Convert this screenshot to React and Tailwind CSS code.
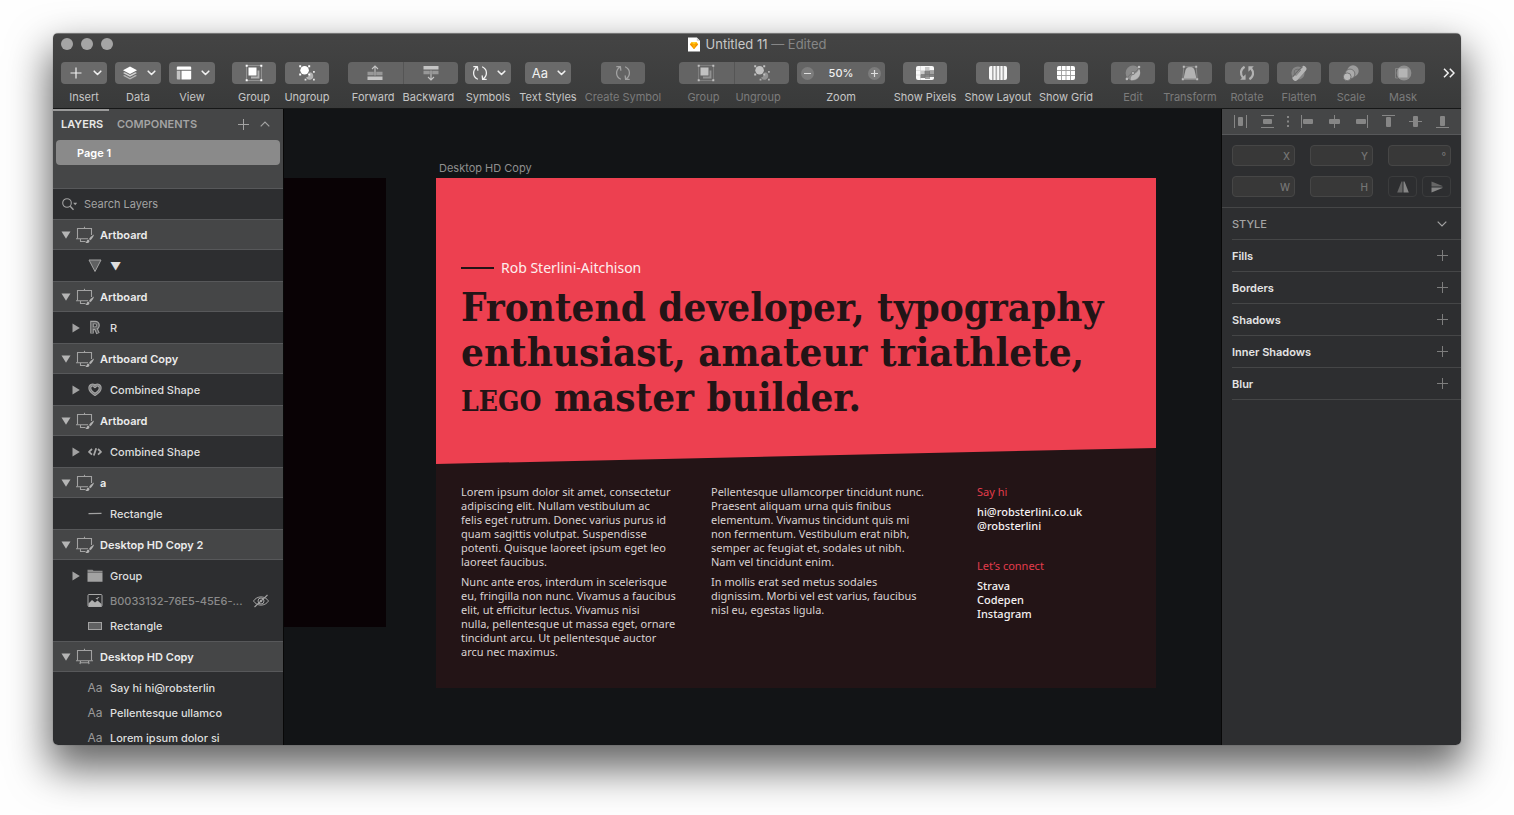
import React from "react";

/* ---------- small glyphs ---------- */

function Svg({ w, h, className = "", children }) {
  return (
    <svg width={w} height={h} viewBox={`0 0 ${w} ${h}`} className={`shrink-0 ${className}`} fill="none" aria-hidden="true">
      {children}
    </svg>
  );
}

const Chevron = () => (
  <Svg w={9} h={6}>
    <path d="M1.2 1.2 4.5 4.5 7.8 1.2" stroke="#f0f0f0" strokeWidth="1.6" strokeLinecap="round" strokeLinejoin="round" />
  </Svg>
);

const PlusGlyph = () => (
  <Svg w={16} h={16}>
    <path d="M8 2.5v11M2.5 8h11" stroke="#f0f0f0" strokeWidth="1.2" />
  </Svg>
);

const DataGlyph = () => (
  <Svg w={16} h={16}>
    <path d="M1 5.2 8 1.5l7 3.7-7 3.8z" fill="#fff" />
    <path d="M1 8l1.6-.8L8 10.1l5.4-2.9L15 8l-7 3.8z" fill="#d2d2d2" />
    <path d="M1 10.8l1.6-.8L8 12.9l5.4-2.9 1.6.8-7 3.8z" fill="#b4b4b4" />
  </Svg>
);

const ViewGlyph = () => (
  <Svg w={16} h={16}>
    <path d="M1.8 1.5h12.4a1 1 0 0 1 1 1v2.2H.8V2.5a1 1 0 0 1 1-1z" fill="#fff" />
    <path d="M.8 5.8h3.6v8.7H1.8a1 1 0 0 1-1-1z" fill="#c4c4c4" />
    <path d="M5.5 5.8h9.7v7.700a1 1 0 0 1-1 1H5.5z" fill="#fff" />
  </Svg>
);

const GroupGlyph = () => (
  <Svg w={18} h={18}>
    <path d="M12.5 6.5h1.9v8H6v-2h6.5z" fill="#b2b2b2" />
    <rect x="3.5" y="3.5" width="8" height="8" fill="#fff" />
    <rect x="1.5" y="1.5" width="15" height="15" stroke="#9b9b9b" strokeWidth=".8" />
    <path d="M.7.7h2v2h-2zM15.3.7h2v2h-2zM.7 15.3h2v2h-2zM15.3 15.3h2v2h-2z" fill="#fff" />
  </Svg>
);

const UngroupGlyph = () => (
  <Svg w={18} h={18}>
    <path d="M11.5 8.2a3.800 3.800 0 1 1-3.5 5.400 5 5 0 0 0 3.5-5.400z" fill="#b2b2b2" />
    <circle cx="6.6" cy="6.2" r="4.3" fill="#fff" />
    <path d="M1.2 1.2h2v2h-2zM10.2 1.2h2v2h-2zM1.2 9.6h2v2h-2zM10.2 9.6h2v2h-2z" fill="#fff" />
    <path d="M15 7h1.800v1.800H15zM6.6 14.8h1.800v1.800H6.6zM15 14.8h1.800v1.800H15z" fill="#e4e4e4" />
  </Svg>
);

const ForwardGlyph = () => (
  <Svg w={16} h={16}>
    <path d="M.5 11.5h15V15H.5z" fill="#c4c4c4" />
    <path d="M.5 6.8h6.300v3.500H.5zM9.2 6.800h6.300v3.500H9.200z" fill="#989898" />
    <path d="M8 10.5V1M5 4l3-3 3 3" stroke="#c4c4c4" strokeWidth="1.1" />
  </Svg>
);

const BackwardGlyph = () => (
  <Svg w={16} h={16}>
    <path d="M.5 1h15v3.500H.5z" fill="#c4c4c4" />
    <path d="M.5 5.700h6.300v3.500H.5zM9.200 5.700h6.300v3.500H9.200z" fill="#989898" />
    <path d="M8 5.500V15M5 12l3 3 3-3" stroke="#c4c4c4" strokeWidth="1.1" />
  </Svg>
);

const CycleGlyph = ({ dim }) => (
  <Svg w={16} h={16}>
    <g stroke={dim ? "#a2a2a2" : "#f0f0f0"} strokeWidth="1.300" strokeLinecap="round" strokeLinejoin="round">
      <path d="M5.400 14C.4 11.500.4 5 5 2M1.800 1.700 5.400 1.600l.4 3.600" />
      <path d="M10.600 2c5 2.500 5 9 .4 12M14.200 14.300l-3.600.1-.4-3.600" />
    </g>
  </Svg>
);

const PixelsGlyph = () => (
  <Svg w={18} h={14}>
    <rect width="18" height="14" rx="2" fill="#f8f8f8" />
    <path d="M4.500 0v14M0 4.500h18M0 9h6" stroke="#cfcfcf" strokeWidth=".6" />
    <path d="M9 4h4.500V1H9zM4.500 8.500H9V5H4.500z" fill="#c9c9c9" />
    <path d="M9 4.500h9V11H9zM4.500 8.500H9V12H4.500z" fill="#858585" />
    <path d="M13.500 4.500H18V8h-4.500zM9 11h5v2H9z" fill="#a2a2a2" />
    <path d="M9 5v7M13.500 5v6M5 8.500h13" stroke="#747474" strokeWidth=".7" />
  </Svg>
);

const LayoutGlyph = () => (
  <Svg w={18} h={14}>
    <rect width="18" height="14" rx="2" fill="#f8f8f8" />
    <path d="M3 0h1.600v14H3zM6.500 0h1.600v14H6.500zM10 0h1.600v14H10zM13.500 0h1.600v14h-1.600z" fill="#ababab" />
  </Svg>
);

const GridGlyph = () => (
  <Svg w={18} h={14}>
    <rect width="18" height="14" rx="2" fill="#fff" />
    <path d="M4.500 0v14M9 0v14M13.500 0v14M0 4.500h18M0 9.500h18" stroke="#9a9a9a" strokeWidth=".9" />
  </Svg>
);

const EditGlyph = () => (
  <Svg w={16} h={16}>
    <circle cx="8" cy="8" r="7.400" fill="#898989" />
    <path d="M14 3.800C17.200 9 13 15.800 5.800 15.200c-.5-3.500 1-5 3.200-6s4-2.400 5-5.400z" fill="#b8b8b8" />
    <path d="M1.800 14C3.200 11 4.800 9.200 8 8s5-3 6-6" stroke="#6e6e6e" strokeWidth=".9" />
    <circle cx="8" cy="8" r="1.600" fill="#b8b8b8" stroke="#6e6e6e" strokeWidth=".7" />
    <circle cx="1.900" cy="13.900" r="1.300" fill="#bdbdbd" />
    <circle cx="14" cy="2" r="1.300" fill="#bdbdbd" />
  </Svg>
);

const TransformGlyph = () => (
  <Svg w={18} h={16}>
    <path d="M4.500 5C5.500 2.500 7 2 9 2s3.500.5 4.500 3l2 8.800h-13z" fill="#b2b2b2" />
    <path d="M2.800 1.800h12.400M2.800 2 1.800 14M15.200 2l1 12M2 14.500h14" stroke="#929292" strokeWidth=".8" />
    <path d="M1.800.8h2v2h-2zM14.200.8h2v2h-2zM.8 13.200h2v2h-2zM15.200 13.200h2v2h-2z" fill="#bdbdbd" />
  </Svg>
);

const RotateGlyph = () => (
  <Svg w={16} h={16}>
    <g stroke="#b2b2b2" strokeWidth="2.200">
      <path d="M5.600 1.800C1.300 4.500.9 9 4 12.800" />
      <path d="M10.400 14.200c4.300-2.700 4.700-7.200 1.600-11" />
    </g>
    <path d="M6.600 9.300v5.400H1.200zM9.400 6.700V1.300h5.400z" fill="#b2b2b2" />
  </Svg>
);

const FlattenGlyph = () => (
  <Svg w={16} h={16}>
    <circle cx="7" cy="8" r="6.600" fill="#868686" />
    <rect x="5.800" y="-1" width="5.600" height="18" rx="2.800" transform="rotate(42 8 8)" fill="#b5b5b5" />
    <path d="M1.800 11.500 11.500 1.500" stroke="#6a6a6a" strokeWidth="1.200" />
    <path d="M3.500 5.500a4.200 4.200 0 0 1 6 0L5 10.500a4 4 0 0 1-1.500-5z" stroke="#6a6a6a" strokeWidth=".8" />
  </Svg>
);

const ScaleGlyph = () => (
  <Svg w={16} h={16}>
    <circle cx="10" cy="6" r="5.700" fill="#9c9c9c" />
    <circle cx="7" cy="9" r="4.900" fill="#aaa" stroke="#666" strokeWidth=".8" />
    <circle cx="4.200" cy="11.800" r="3.900" fill="#b8b8b8" stroke="#666" strokeWidth=".8" />
  </Svg>
);

const MaskGlyph = () => (
  <Svg w={18} h={16}>
    <path d="M4 3.500H1.500v9.500H4" stroke="#868686" strokeWidth=".9" />
    <circle cx="10" cy="8" r="7.400" fill="#8f8f8f" />
    <rect x="4.500" y="3.500" width="9" height="9" fill="#b5b5b5" />
  </Svg>
);

const SketchDoc = () => (
  <Svg w={12} h={15}>
    <path d="M0 .5h8.800L12 3.700v10.800H0z" fill="#fff" />
    <path d="M8.800.5v3.200H12z" fill="#cfcfcf" />
    <path d="M3.600 5h4.800l1.800 2.200L6 12 1.800 7.200z" fill="#fdad00" />
    <path d="M3.600 5h4.800L6 7.200z" fill="#fdd231" />
    <path d="M1.800 7.200h8.400L6 12z" fill="#ee8a00" />
    <path d="M3.900 7.200h4.200L6 12z" fill="#fdad00" />
  </Svg>
);

/* ---------- toolbar ---------- */

function ToolButton({ label, cell, dim, menu, wide, children }) {
  return (
    <div className={`flex shrink-0 flex-col items-center gap-[5px] ${cell}`}>
      <button
        type="button"
        aria-label={label}
        className={`flex h-[22px] items-center justify-center rounded ${dim ? "bg-[#646464]" : "bg-[#6a6a6a]"} ${wide ? "w-[46px] gap-[9px] pl-[2px]" : "w-11"}`}
      >
        {children}
        {menu && <Chevron />}
      </button>
      <span className={`text-[11px] leading-4 whitespace-nowrap ${dim ? "text-[#7b7b7b]" : "text-[#c6c6c6]"}`}>{label}</span>
    </div>
  );
}

function Segmented({ items, className, dim }) {
  return (
    <div className={`flex w-[110px] shrink-0 flex-col gap-[5px] ${className}`}>
      <div className="flex">
        {items.map((it, i) => (
          <button
            key={it.label}
            type="button"
            aria-label={it.label}
            className={`flex h-[22px] flex-1 items-center justify-center bg-[#646464] ${i === 0 ? "rounded-l border-r border-[#555555]" : "rounded-r"}`}
          >
            <span className={dim ? "opacity-60" : ""}>{it.icon}</span>
          </button>
        ))}
      </div>
      <div className={`flex justify-center text-[11px] leading-4 whitespace-nowrap ${dim ? "gap-4 text-[#7b7b7b]" : "gap-2 text-[#c6c6c6]"}`}>
        {items.map((it) => (
          <span key={it.label}>{it.label}</span>
        ))}
      </div>
    </div>
  );
}

function Header() {
  return (
    <header className="shrink-0 border-t border-b border-t-[#757575] border-b-[#161717] bg-linear-to-b from-[#444444] to-[#393a3a]">
      <div className="grid h-5 grid-cols-[1fr_auto_1fr] items-center">
        <div className="flex gap-2 pl-2">
          {["Close", "Minimize", "Zoom window"].map((n) => (
            <button key={n} type="button" aria-label={n} className="size-3 rounded-full bg-[#a5a5a5]" />
          ))}
        </div>
        <h1 className="flex items-center gap-[6px] text-[13px] leading-4 text-[#c8c8c8]">
          <SketchDoc />
          <span>
            Untitled 11 <span className="text-[#868686]">— Edited</span>
          </span>
        </h1>
      </div>
      <div className="flex h-[54px] overflow-hidden pt-2 pl-1">
        <ToolButton label="Insert" cell="w-[54px]" menu wide><PlusGlyph /></ToolButton>
        <ToolButton label="Data" cell="w-[54px]" menu wide><DataGlyph /></ToolButton>
        <ToolButton label="View" cell="w-[54px]" menu wide><ViewGlyph /></ToolButton>
        <ToolButton label="Group" cell="ml-2 w-[54px]"><GroupGlyph /></ToolButton>
        <ToolButton label="Ungroup" cell="w-[52px]"><UngroupGlyph /></ToolButton>
        <Segmented
          className="ml-[15px]"
          items={[
            { label: "Forward", icon: <ForwardGlyph /> },
            { label: "Backward", icon: <BackwardGlyph /> },
          ]}
        />
        <ToolButton label="Symbols" cell="w-[60px]" menu wide><CycleGlyph /></ToolButton>
        <ToolButton label="Text Styles" cell="w-[60px]" menu wide>
          <span className="text-[13px] leading-4 text-[#f0f0f0]">Aa</span>
        </ToolButton>
        <ToolButton label="Create Symbol" cell="w-[90px]" dim><CycleGlyph dim /></ToolButton>
        <Segmented
          className="ml-[11px]"
          dim
          items={[
            { label: "Group", icon: <GroupGlyph /> },
            { label: "Ungroup", icon: <UngroupGlyph /> },
          ]}
        />
        <div className="ml-[5px] flex w-[94px] shrink-0 flex-col items-center gap-[5px]">
          <div className="flex h-[22px] w-[88px] items-center justify-between rounded bg-[#646464] px-1">
            <button type="button" aria-label="Zoom out" className="flex size-[13px] items-center justify-center rounded-full bg-[#7c7c7c]">
              <Svg w={9} h={9}><path d="M1 4.500h7" stroke="#ddd" strokeWidth="1.200" /></Svg>
            </button>
            <output className="text-[11px] leading-4 font-medium text-[#f0f0f0]">50%</output>
            <button type="button" aria-label="Zoom in" className="flex size-[13px] items-center justify-center rounded-full bg-[#7c7c7c]">
              <Svg w={9} h={9}><path d="M1 4.500h7M4.500 1v7" stroke="#ddd" strokeWidth="1.200" /></Svg>
            </button>
          </div>
          <span className="text-[11px] leading-4 text-[#c6c6c6]">Zoom</span>
        </div>
        <ToolButton label="Show Pixels" cell="w-[74px]"><PixelsGlyph /></ToolButton>
        <ToolButton label="Show Layout" cell="w-[72px]"><LayoutGlyph /></ToolButton>
        <ToolButton label="Show Grid" cell="w-16"><GridGlyph /></ToolButton>
        <ToolButton label="Edit" cell="ml-[9px] w-[52px]" dim><EditGlyph /></ToolButton>
        <ToolButton label="Transform" cell="w-[62px]" dim><TransformGlyph /></ToolButton>
        <ToolButton label="Rotate" cell="w-[52px]" dim><RotateGlyph /></ToolButton>
        <ToolButton label="Flatten" cell="w-[52px]" dim><FlattenGlyph /></ToolButton>
        <ToolButton label="Scale" cell="w-[52px]" dim><ScaleGlyph /></ToolButton>
        <ToolButton label="Mask" cell="w-[52px]" dim><MaskGlyph /></ToolButton>
        <button type="button" aria-label="More tools" className="ml-auto flex h-[22px] items-center pr-[6px]">
          <Svg w={12} h={10}>
            <path d="M1 .8 5.200 5 1 9.200M6.800.8 11 5 6.800 9.200" stroke="#f0f0f0" strokeWidth="1.500" />
          </Svg>
        </button>
      </div>
    </header>
  );
}

/* ---------- layer list ---------- */

const ArtboardIcon = ({ brush }) => (
  <Svg w={18} h={18}>
    <g stroke="#a2a2a2" strokeWidth="1.100">
      <path d="M8.500.8v1.700" />
      {brush ? (
        <>
          <path d="M15.500 9V2.500h-14v10" />
          <path d="M0 12.800h12M4.500 13v2.500h5" />
        </>
      ) : (
        <>
          <path d="M1.500 12.500v-10h14v10" />
          <path d="M0 12.800h17M4 16.200l.5-3M13 16.200l-.5-3M4.500 14.800h8" />
        </>
      )}
    </g>
    {brush && (
      <>
        <path d="M18 8.500c-2 1-4 3-5 4.500l1.200 1.200c1.600-1.200 3.400-3.400 3.800-5.700z" fill="#b2b2b2" />
        <path d="M12.300 13.500c-1.600.2-1.300 2.400-3 3.200 2.200.8 4.300 0 4.200-2z" fill="#b2b2b2" />
      </>
    )}
  </Svg>
);

const itemIcons = {
  triangle: <Svg w={16} h={16}><path d="M2 2h12L8 13.500z" fill="#606162" stroke="#a2a2a2" strokeLinejoin="round" /></Svg>,
  letter: (
    <Svg w={16} h={16}>
      <path d="M5 13.500v-11h3.200a2.700 2.700 0 0 1 0 5.700H5M8.800 8.500l2.200 5" stroke="#a2a2a2" strokeWidth="3.600" />
      <path d="M5 13V2.700h3.200a2.500 2.500 0 0 1 0 5.300H5M8.800 8.500l2 4.500" stroke="#606162" strokeWidth="1.600" />
    </Svg>
  ),
  heart: (
    <Svg w={16} h={16}>
      <path d="M8 12.500C4.500 10.200 2.800 8.200 2.800 6c0-3 3.700-4 5.200-1.300C9.500 2 13.200 3 13.200 6c0 2.200-1.700 4.200-5.200 6.500z" stroke="#a2a2a2" strokeWidth="3" strokeLinejoin="round" />
      <path d="M8 12.500C4.500 10.200 2.800 8.200 2.800 6c0-3 3.700-4 5.200-1.300C9.500 2 13.200 3 13.200 6c0 2.200-1.700 4.200-5.200 6.500z" stroke="#7a7b7c" strokeWidth="1" />
      <path d="M8 9.800 5.300 7c0-1.200 1.500-1.600 2.700-.2 1.200-1.400 2.700-1 2.700.2z" fill="#2d2e30" />
    </Svg>
  ),
  code: (
    <Svg w={16} h={16}>
      <path d="M5 5 2 7.800l3 2.800M11 5l3 2.800-3 2.800M9.200 4.200 6.800 11.500" stroke="#a8a8a8" strokeWidth="1.800" strokeLinejoin="round" />
    </Svg>
  ),
  line: <Svg w={16} h={16}><path d="M1.500 7.700 14.500 7.300" stroke="#a2a2a2" strokeWidth="1.300" /></Svg>,
  folder: (
    <Svg w={16} h={16}>
      <path d="M.5 1.800h5l1 1h9v1.400H.5z" fill="#8c8c8c" />
      <path d="M.5 4.600h15v9.200H.5z" fill="#a2a2a2" />
    </Svg>
  ),
  image: (
    <Svg w={16} h={16}>
      <rect x="1" y="1.500" width="14" height="12" rx="1" stroke="#a8a8a8" />
      <path d="M1.500 10.500 5 7l3 2.500 2.500-2 4 3.500v2.500h-13z" fill="#b0b0b0" />
      <path d="M8.500 5.500c1 0 1.200.8 1.800 1.200.5-.6.600-2.200 2.200-2.500-1.500-.5-2 .3-2.300 1-.5-.5-1-.4-1.700.3z" fill="#b0b0b0" />
    </Svg>
  ),
  rect: <Svg w={16} h={16}><rect x="1.500" y="4.500" width="13" height="7" fill="#606162" stroke="#a2a2a2" /></Svg>,
  text: <span className="w-4 text-center text-xs leading-4 text-[#9a9a9a]">Aa</span>,
};

const boards = [
  { name: "Artboard", brush: true, items: [{ icon: "triangle", name: "▼" }] },
  { name: "Artboard", brush: true, items: [{ icon: "letter", name: "R", open: true }] },
  { name: "Artboard Copy", brush: true, items: [{ icon: "heart", name: "Combined Shape", open: true }] },
  { name: "Artboard", brush: true, items: [{ icon: "code", name: "Combined Shape", open: true }] },
  { name: "a", brush: true, items: [{ icon: "line", name: "Rectangle" }] },
  {
    name: "Desktop HD Copy 2",
    brush: true,
    items: [
      { icon: "folder", name: "Group", open: true },
      { icon: "image", name: "B0033132-76E5-45E6-...", hidden: true },
      { icon: "rect", name: "Rectangle" },
    ],
  },
  {
    name: "Desktop HD Copy",
    items: [
      { icon: "text", name: "Say hi hi@robsterlin" },
      { icon: "text", name: "Pellentesque ullamco" },
      { icon: "text", name: "Lorem ipsum dolor si" },
    ],
  },
];

function LayersPanel() {
  return (
    <aside className="flex w-[231px] shrink-0 flex-col overflow-hidden border-r border-[#080808] bg-[#2d2e30]">
      <div className="h-20 shrink-0 border-b border-[#57585a] bg-[#454647]">
        <div className="mb-px flex h-[30px] items-start pr-[13px]">
          <button type="button" className="flex h-full w-14 items-center pl-2 text-[11px] leading-4 font-semibold text-[#e8e8e8] shadow-[inset_0_2px_0_#9a9a9a]">
            LAYERS
          </button>
          <button type="button" className="ml-2 flex h-full items-center text-[11px] leading-4 font-semibold text-[#a3a3a3]">
            COMPONENTS
          </button>
          <div className="ml-auto flex h-full items-center gap-[11px]">
            <button type="button" aria-label="Add page">
              <Svg w={11} h={11}><path d="M5.500 0v11M0 5.500h11" stroke="#a3a3a3" /></Svg>
            </button>
            <button type="button" aria-label="Collapse pages">
              <Svg w={10} h={6}><path d="M.7 5.300 5 1l4.300 4.300" stroke="#a3a3a3" strokeWidth="1.200" /></Svg>
            </button>
          </div>
        </div>
        <button type="button" className="mx-[3px] block h-[25px] w-56 rounded bg-[#8a8a8a] pl-[21px] text-left text-[11px] leading-4 font-semibold text-white">
          Page 1
        </button>
      </div>
      <div className="flex h-[30px] shrink-0 items-center gap-[6px] pl-2">
        <Svg w={17} h={14}>
          <circle cx="6" cy="6" r="4.300" stroke="#a3a3a3" strokeWidth="1.100" />
          <path d="m9.200 9.200 3.300 3.600" stroke="#a3a3a3" strokeWidth="1.300" />
          <path d="M12.200 5.800h4l-2 2.500z" fill="#a3a3a3" />
        </Svg>
        <input
          type="search"
          aria-label="Search layers"
          placeholder="Search Layers"
          className="min-w-0 flex-1 bg-transparent text-[11px] leading-4 outline-none placeholder:text-[#a3a3a3]"
        />
      </div>
      <ul className="min-h-0 flex-1 overflow-hidden">
        {boards.map((b, i) => (
          <li key={i}>
            <div className="flex h-[31px] items-center border-y border-[#57585a] bg-[#454647] pl-2">
              <button type="button" aria-label={`Collapse ${b.name}`}>
                <Svg w={10} h={8}><path d="M.5.500h9L5 7.800z" fill="#b5b5b5" /></Svg>
              </button>
              <span className="ml-[5px] flex"><ArtboardIcon brush={b.brush} /></span>
              <span className="ml-[6px] text-[11px] leading-4 font-semibold text-[#ececec]">{b.name}</span>
            </div>
            <ul className="py-[3px]">
              {b.items.map((it) => (
                <li key={it.name} className="flex h-[25px] items-center pr-[13px] pl-[19px]">
                  <span className="flex w-[15px] shrink-0">
                    {it.open && (
                      <button type="button" aria-label={`Expand ${it.name}`}>
                        <Svg w={8} h={10}><path d="M.5.500v9L7.800 5z" fill="#a2a2a2" /></Svg>
                      </button>
                    )}
                  </span>
                  {itemIcons[it.icon]}
                  <span className={`ml-[7px] text-[11px] leading-4 font-medium whitespace-nowrap ${it.hidden ? "text-[#8a8a8a]" : "text-[#dedede]"}`}>{it.name}</span>
                  {it.hidden && (
                    <button type="button" aria-label="Show layer" className="ml-auto">
                      <Svg w={18} h={14}>
                        <path d="M1.500 7C5 1.500 13 1.500 16.500 7 13 12.500 5 12.500 1.500 7z" stroke="#a2a2a2" />
                        <circle cx="9" cy="7" r="3" stroke="#a2a2a2" />
                        <circle cx="9" cy="7" r="1.200" fill="#a2a2a2" />
                        <path d="M2.500 13 15.500 1" stroke="#a2a2a2" strokeWidth="1.100" />
                      </Svg>
                    </button>
                  )}
                </li>
              ))}
            </ul>
          </li>
        ))}
      </ul>
    </aside>
  );
}

/* ---------- canvas ---------- */

function Lines({ lines }) {
  return (
    <p className="whitespace-nowrap">
      {lines.map((l) => (
        <React.Fragment key={l}>
          {l}
          <br />
        </React.Fragment>
      ))}
    </p>
  );
}

function Canvas() {
  return (
    <main className="relative min-w-0 flex-1 overflow-hidden bg-[#121416]">
      <div className="absolute top-[69px] left-0 h-[449px] w-[102px] bg-[#090205]" />
      <section className="absolute top-[51px] left-[152px] w-[720px]">
        <h2 className="h-[18px] pl-[3px] text-[11px] leading-4 text-[#8f8f8f]">Desktop HD Copy</h2>
        <div className="bg-[#231416]">
          <div className="h-[286px] bg-[#ed4050] px-[25px] pt-20 [clip-path:polygon(0_0,100%_0,100%_270px,0_100%)]">
            <p className="flex items-center gap-[7px] font-['Noto_Sans',sans-serif] text-sm leading-5 text-[#fdeeee]">
              <span className="h-[2px] w-[33px] bg-[#231416]" />
              Rob Sterlini-Aitchison
            </p>
            <p className="mt-[6px] font-['DejaVu_Serif_Condensed','DejaVu_Serif',serif] text-[40px] leading-[45px] font-bold whitespace-nowrap text-[#231416]">
              Frontend developer, typography
              <br />
              enthusiast, amateur triathlete,
              <br />
              <span className="[font-variant-caps:all-small-caps]">LEGO</span> master builder.
            </p>
          </div>
          <div className="flex h-[224px] px-[25px] pt-[21px] font-['Noto_Sans',sans-serif] text-[11px] leading-[14px] text-[#d9d2d2]">
            <div className="flex w-[250px] flex-col gap-[6px]">
              <Lines lines={["Lorem ipsum dolor sit amet, consectetur", "adipiscing elit. Nullam vestibulum ac", "felis eget rutrum. Donec varius purus id", "quam sagittis volutpat. Suspendisse", "potenti. Quisque laoreet ipsum eget leo", "laoreet faucibus."]} />
              <Lines lines={["Nunc ante eros, interdum in scelerisque", "eu, fringilla non nunc. Vivamus a faucibus", "elit, ut efficitur lectus. Vivamus nisi", "nulla, pellentesque ut massa eget, ornare", "tincidunt arcu. Ut pellentesque auctor", "arcu nec maximus."]} />
            </div>
            <div className="flex w-[266px] flex-col gap-[6px]">
              <Lines lines={["Pellentesque ullamcorper tincidunt nunc.", "Praesent aliquam urna quis finibus", "elementum. Vivamus tincidunt quis mi", "non fermentum. Vestibulum erat nibh,", "semper ac feugiat et, sodales ut nibh.", "Nam vel tincidunt enim."]} />
              <Lines lines={["In mollis erat sed metus sodales", "dignissim. Morbi vel est varius, faucibus", "nisl eu, egestas ligula."]} />
            </div>
            <div className="flex flex-col gap-[6px] font-medium text-[#f4f0f0]">
              <h3 className="font-normal text-[#e23c4c]">Say hi</h3>
              <Lines lines={["hi@robsterlini.co.uk", "@robsterlini"]} />
              <h3 className="mt-5 font-normal text-[#e23c4c]">Let’s connect</h3>
              <Lines lines={["Strava", "Codepen", "Instagram"]} />
            </div>
          </div>
        </div>
      </section>
    </main>
  );
}

/* ---------- inspector ---------- */

const aligns = [
  ["Distribute horizontally", "M1.500 1v13M13.500 1v13", [5, 3, 5, 9]],
  ["Distribute vertically", "M1 1.500h13M1 13.500h13", [3, 5, 9, 5]],
  null,
  ["Align left", "M1.500 1v13", [3, 5, 10, 5]],
  ["Align center", "M7.500 1v13", [2, 5, 11, 5]],
  ["Align right", "M13.500 1v13", [2, 5, 10, 5]],
  ["Align top", "M1 1.500h13", [5, 3, 5, 10]],
  ["Align middle", "M1 7.500h13", [5, 2, 5, 11]],
  ["Align bottom", "M1 13.500h13", [5, 2, 5, 10]],
];

function Field({ id, label }) {
  return (
    <div className="flex h-[21px] w-[63px] items-center rounded border border-[#464646] bg-[#383838] pr-1">
      <input id={id} disabled className="min-w-0 flex-1 bg-transparent text-[11px]" />
      <label htmlFor={id} className="text-[10px] leading-4 font-medium text-[#757575]">{label}</label>
    </div>
  );
}

function Inspector() {
  return (
    <aside className="w-[240px] shrink-0 overflow-hidden border-l border-[#080808] bg-[#2d2e30]">
      <div className="flex h-[26px] items-center border-b border-[#57585a] bg-[#454647] pl-[5px]">
        {aligns.map((a) =>
          a ? (
            <button key={a[0]} type="button" aria-label={a[0]} className="flex w-[27px] justify-center">
              <Svg w={15} h={15}>
                <path d={a[1]} stroke="#868686" />
                <rect x={a[2][0]} y={a[2][1]} width={a[2][2]} height={a[2][3]} rx="1" fill="#868686" />
              </Svg>
            </button>
          ) : (
            <span key="sep" className="flex w-[13px] justify-center">
              <Svg w={2} h={11}><path d="M1 0v11" stroke="#868686" strokeWidth="2" strokeDasharray="2 2.500" /></Svg>
            </span>
          )
        )}
      </div>
      <div className="grid grid-cols-3 gap-y-[10px] border-b border-[#454647] px-[10px] py-[10px]">
        <Field id="pos-x" label="X" />
        <div className="flex justify-center"><Field id="pos-y" label="Y" /></div>
        <div className="flex justify-end"><Field id="angle" label="°" /></div>
        <Field id="size-w" label="W" />
        <div className="flex justify-center"><Field id="size-h" label="H" /></div>
        <div className="flex justify-end gap-[5px]">
          <button type="button" aria-label="Flip horizontally" className="flex h-[21px] w-[29px] items-center justify-center rounded border border-[#3b3c3d]">
            <Svg w={12} h={12}>
              <path d="M4.500.5h1v11H.2z" fill="#666" />
              <path d="M6.500.5h1l4.300 11H6.500z" fill="#868686" />
            </Svg>
          </button>
          <button type="button" aria-label="Flip vertically" className="flex h-[21px] w-[29px] items-center justify-center rounded border border-[#3b3c3d]">
            <Svg w={12} h={12}>
              <path d="M.5.5 11.500 5v.6H.5z" fill="#666" />
              <path d="M.5 6.500h11V7L.5 11.500z" fill="#868686" />
            </Svg>
          </button>
        </div>
      </div>
      <div className="pl-[10px]">
        <div className="flex h-8 items-center justify-between border-b border-[#454647] pr-[14px]">
          <h2 className="text-[11px] leading-4 font-medium text-[#a3a3a3]">STYLE</h2>
          <button type="button" aria-label="Style options">
            <Svg w={10} h={6}><path d="M.7.7 5 5 9.300.7" stroke="#a3a3a3" strokeWidth="1.200" /></Svg>
          </button>
        </div>
        {["Fills", "Borders", "Shadows", "Inner Shadows", "Blur"].map((s) => (
          <div key={s} className="flex h-8 items-center justify-between border-b border-[#454647] pr-[13px]">
            <h3 className="text-[11px] leading-4 font-semibold text-[#e4e4e4]">{s}</h3>
            <button type="button" aria-label={`Add to ${s}`}>
              <Svg w={11} h={11}><path d="M5.500 0v11M0 5.500h11" stroke="#7d7d7d" /></Svg>
            </button>
          </div>
        ))}
      </div>
    </aside>
  );
}

export default function App() {
  return (
    <div className="flex h-screen overflow-hidden bg-[#fefefe] px-[53px] pt-[33px] pb-[70px] font-[Inter,sans-serif]">
      <div className="flex min-w-0 flex-1 flex-col overflow-hidden rounded-[5px] shadow-[0_0_1px_0_rgba(0,0,0,0.5),0_20px_40px_4px_rgba(0,0,0,0.6)]">
        <Header />
        <div className="flex min-h-0 flex-1">
          <LayersPanel />
          <Canvas />
          <Inspector />
        </div>
      </div>
    </div>
  );
}
